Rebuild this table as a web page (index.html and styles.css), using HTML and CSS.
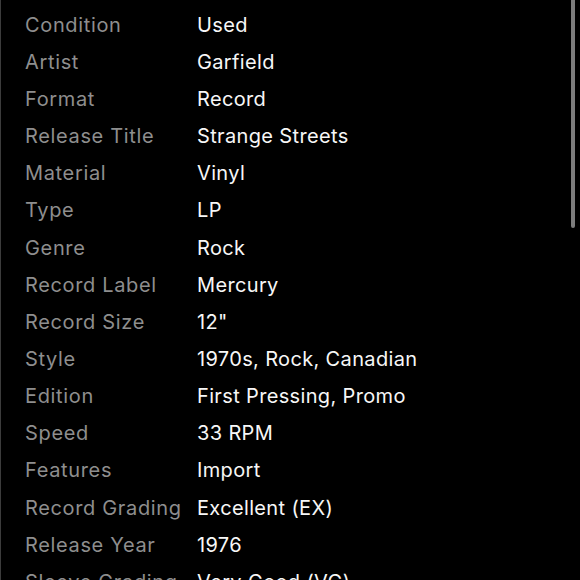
FILE: index.html
```html
<!DOCTYPE html>
<html>
<head>
<meta charset="utf-8">
<link rel="stylesheet" href="styles.css">
</head>
<body>
<div class="panel">
  <dl class="specs">
    <dt>Condition</dt><dd>Used</dd>
    <dt>Artist</dt><dd>Garfield</dd>
    <dt>Format</dt><dd>Record</dd>
    <dt>Release Title</dt><dd>Strange Streets</dd>
    <dt>Material</dt><dd>Vinyl</dd>
    <dt>Type</dt><dd>LP</dd>
    <dt>Genre</dt><dd>Rock</dd>
    <dt>Record Label</dt><dd>Mercury</dd>
    <dt>Record Size</dt><dd>12"</dd>
    <dt>Style</dt><dd>1970s, Rock, Canadian</dd>
    <dt>Edition</dt><dd>First Pressing, Promo</dd>
    <dt>Speed</dt><dd>33 RPM</dd>
    <dt>Features</dt><dd>Import</dd>
    <dt>Record Grading</dt><dd>Excellent (EX)</dd>
    <dt>Release Year</dt><dd>1976</dd>
    <dt>Sleeve Grading</dt><dd>Very Good (VG)</dd>
    <dt>Country</dt><dd>Canada</dd>
  </dl>
  <div class="scrollbar"></div>
</div>
</body>
</html>
```
FILE: styles.css
```css
html, body {
  margin: 0;
  padding: 0;
  background: #000;
  height: 100%;
  overflow: hidden;
}
.panel {
  position: relative;
  height: 580px;
  border-left: 1px solid #3c3c3c;
  box-sizing: border-box;
  overflow: hidden;
  font-family: Inter, "Noto Sans", sans-serif;
  font-size: 20px;
}
.specs {
  margin: 0;
  padding: 6px 0 0 24px;
  display: grid;
  grid-template-columns: 172px 1fr;
  grid-auto-rows: 37.17px;
  align-items: center;
}
.specs dt {
  color: #8e8e8e;
  letter-spacing: 0.65px;
  white-space: nowrap;
}
.specs dd {
  margin: 0;
  color: #f7f7f7;
  letter-spacing: 0.35px;
  white-space: nowrap;
}
.scrollbar {
  position: absolute;
  top: 0;
  right: 5px;
  width: 4px;
  height: 228px;
  background: #7d7d7d;
  border-radius: 0 0 2px 2px;
}
```
